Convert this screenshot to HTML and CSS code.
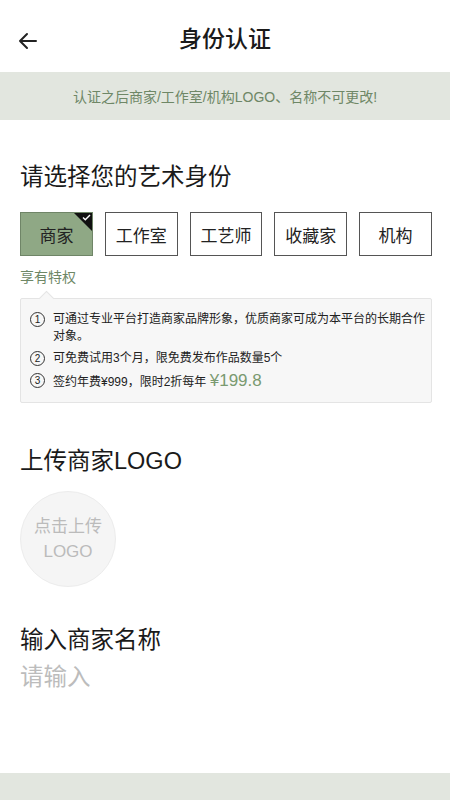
FILE: index.html
```html
<!DOCTYPE html>
<html lang="zh">
<head>
<meta charset="utf-8">
<title>身份认证</title>
<link rel="stylesheet" href="styles.css">
</head>
<body>
<div class="page">
  <header class="topbar">
    <svg class="back" width="22" height="22" viewBox="0 0 22 22"><path d="M19 11H3M10 4L3 11L10 18" fill="none" stroke="#222" stroke-width="2" stroke-linecap="round" stroke-linejoin="round"/></svg>
    <h1 class="title">身份认证</h1>
  </header>
  <div class="notice">认证之后商家/工作室/机构LOGO、名称不可更改!</div>

  <main class="content">
    <h2 class="section-title first">请选择您的艺术身份</h2>
    <div class="roles">
      <div class="role active">商家<span class="corner"><svg width="9" height="7" viewBox="0 0 9 7"><path d="M1 3.5L3.3 5.8L8 1" fill="none" stroke="#fff" stroke-width="1.4"/></svg></span></div>
      <div class="role">工作室</div>
      <div class="role">工艺师</div>
      <div class="role">收藏家</div>
      <div class="role">机构</div>
    </div>
    <div class="perk-label">享有特权</div>
    <div class="perks">
      <div class="perk"><span class="num">1</span><span class="ptext">可通过专业平台打造商家品牌形象，优质商家可成为本平台的长期合作对象。</span></div>
      <div class="perk"><span class="num">2</span><span class="ptext">可免费试用3个月，限免费发布作品数量5个</span></div>
      <div class="perk"><span class="num">3</span><span class="ptext">签约年费¥999，限时2折每年 <span class="price">¥199.8</span></span></div>
    </div>

    <h2 class="section-title upload-title">上传商家LOGO</h2>
    <div class="logo-upload">点击上传<br>LOGO</div>

    <h2 class="section-title name-title">输入商家名称</h2>
    <div class="name-input">请输入</div>
  </main>
  <footer class="bottombar"></footer>
</div>
</body>
</html>
```

FILE: styles.css
```css
* { box-sizing: border-box; margin: 0; padding: 0; }
html, body { width: 450px; height: 800px; }
body {
  font-family: "Liberation Sans", "Noto Sans CJK SC", sans-serif;
  background: #fff;
  color: #222;
  overflow: hidden;
}
.page {
  height: 800px;
  display: flex;
  flex-direction: column;
}
.topbar {
  height: 72px;
  position: relative;
  display: flex;
  align-items: center;
  justify-content: center;
}
.back {
  position: absolute;
  left: 17px;
  top: 30px;
}
.title {
  font-size: 23px;
  font-weight: 500;
  color: #1a1a1a;
  margin-top: 2px;
}
.notice {
  height: 48px;
  background: #e2e6df;
  color: #6e8766;
  font-size: 14px;
  display: flex;
  align-items: center;
  justify-content: center;
}
.content {
  flex: 1;
  padding: 0 18px 0 20px;
}
.section-title {
  font-size: 23.5px;
  font-weight: 400;
  color: #1a1a1a;
  line-height: 30px;
}
.section-title.first { margin-top: 42px; }
.roles {
  display: flex;
  gap: 12px;
  margin-top: 20px;
}
.role {
  flex: 1;
  height: 44px;
  border: 1px solid #555;
  display: flex;
  align-items: center;
  justify-content: center;
  font-size: 17px;
  color: #222;
  position: relative;
  overflow: hidden;
}
.role.active {
  background: #8fa885;
  border-color: #6f8567;
}
.corner {
  position: absolute;
  top: 0;
  right: 0;
  width: 0;
  height: 0;
  border-top: 18px solid #111;
  border-left: 18px solid transparent;
}
.corner svg {
  position: absolute;
  top: -17px;
  right: 1px;
}
.perk-label {
  margin-top: 10px;
  font-size: 14px;
  color: #6e8766;
  line-height: 22px;
}
.perks {
  margin-top: 10px;
  background: #f7f7f7;
  border: 1px solid #e4e4e4;
  border-radius: 2px;
  padding: 12px 6px 11px 9px;
  position: relative;
  display: flex;
  flex-direction: column;
  gap: 5px;
}
.perks::before {
  content: "";
  position: absolute;
  left: 20px;
  top: -6px;
  width: 10px;
  height: 10px;
  background: #f7f7f7;
  border-left: 1px solid #e4e4e4;
  border-top: 1px solid #e4e4e4;
  transform: rotate(45deg);
}
.perk {
  display: flex;
  align-items: flex-start;
  font-size: 12px;
  line-height: 17px;
  color: #222;
}
.num {
  flex: none;
  width: 15px;
  height: 15px;
  border: 1px solid #333;
  border-radius: 50%;
  font-size: 10px;
  line-height: 13px;
  text-align: center;
  margin: 1px 8px 0 0;
}
.ptext { flex: 1; }
.price {
  font-size: 17px;
  color: #7a9a70;
}
.upload-title { margin-top: 43px; }
.logo-upload {
  margin-top: 15px;
  width: 96px;
  height: 96px;
  border-radius: 50%;
  background: #f5f5f5;
  border: 1px solid #ececec;
  color: #bbb;
  font-size: 17px;
  line-height: 25px;
  display: flex;
  align-items: center;
  justify-content: center;
  text-align: center;
}
.name-title { margin-top: 38px; }
.name-input {
  margin-top: 7px;
  font-size: 23.5px;
  color: #bcbcbc;
  line-height: 30px;
}
.bottombar {
  height: 27px;
  background: #e2e6df;
}
```
